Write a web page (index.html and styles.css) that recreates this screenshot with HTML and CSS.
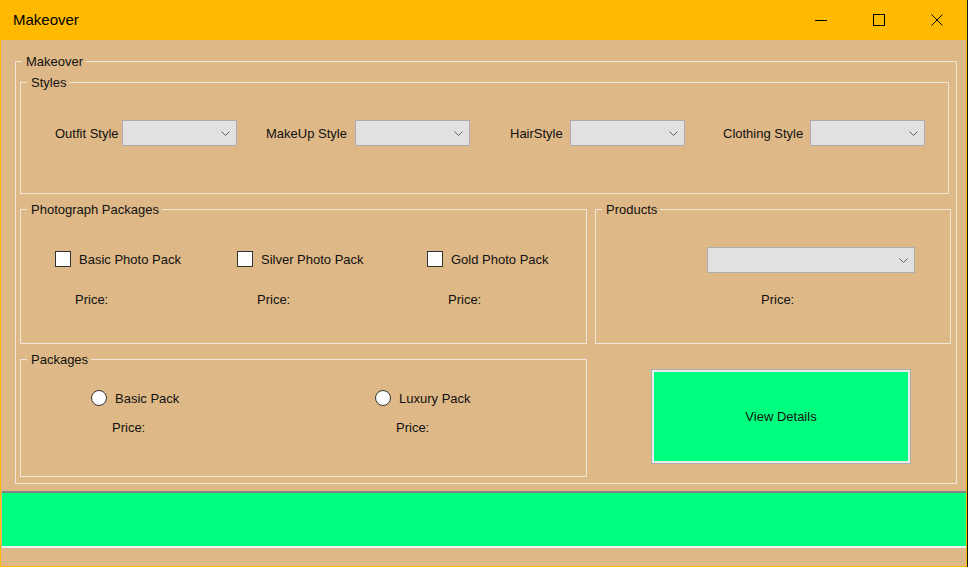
FILE: index.html
```html
<!DOCTYPE html>
<html>
<head>
<meta charset="utf-8">
<title>Makeover</title>
<link rel="stylesheet" href="styles.css">
</head>
<body>
<div class="window">
  <div class="titlebar">
    <span class="title">Makeover</span>
    <div class="caption-buttons">
      <div class="cbtn"><svg width="12" height="12" viewBox="0 0 12 12"><path d="M0 6.5H12" stroke="#000" stroke-width="1" fill="none"/></svg></div>
      <div class="cbtn"><svg width="12" height="12" viewBox="0 0 12 12"><rect x="0.5" y="0.5" width="11" height="11" stroke="#000" stroke-width="1" fill="none"/></svg></div>
      <div class="cbtn"><svg width="12" height="12" viewBox="0 0 12 12"><path d="M0.5 0.5L11.5 11.5M11.5 0.5L0.5 11.5" stroke="#000" stroke-width="1" fill="none"/></svg></div>
    </div>
  </div>
  <div class="client">
    <div class="group outer">
      <span class="legend">Makeover</span>

      <div class="group styles">
        <span class="legend">Styles</span>
        <div class="style-row">
          <span class="lbl">Outfit Style</span>
          <div class="combo"><svg width="9" height="5" viewBox="0 0 9 5"><path d="M0.5 0.5L4.5 4.5L8.5 0.5" stroke="#606060" fill="none"/></svg></div>
          <span class="lbl gap29">MakeUp Style</span>
          <div class="combo"><svg width="9" height="5" viewBox="0 0 9 5"><path d="M0.5 0.5L4.5 4.5L8.5 0.5" stroke="#606060" fill="none"/></svg></div>
          <span class="lbl gap40">HairStyle</span>
          <div class="combo"><svg width="9" height="5" viewBox="0 0 9 5"><path d="M0.5 0.5L4.5 4.5L8.5 0.5" stroke="#606060" fill="none"/></svg></div>
          <span class="lbl gap38">Clothing Style</span>
          <div class="combo"><svg width="9" height="5" viewBox="0 0 9 5"><path d="M0.5 0.5L4.5 4.5L8.5 0.5" stroke="#606060" fill="none"/></svg></div>
        </div>
      </div>

      <div class="row">
        <div class="group photo">
          <span class="legend">Photograph Packages</span>
          <div class="photo-grid">
            <label class="check"><span class="box"></span><span>Basic Photo Pack</span></label>
            <label class="check"><span class="box"></span><span>Silver Photo Pack</span></label>
            <label class="check"><span class="box"></span><span>Gold Photo Pack</span></label>
            <span class="price">Price:</span>
            <span class="price">Price:</span>
            <span class="price price-wide">Price:</span>
          </div>
        </div>
        <div class="group products">
          <span class="legend">Products</span>
          <div class="combo combo-wide"><svg width="9" height="5" viewBox="0 0 9 5"><path d="M0.5 0.5L4.5 4.5L8.5 0.5" stroke="#606060" fill="none"/></svg></div>
          <span class="product-price">Price:</span>
        </div>
      </div>

      <div class="row row3">
        <div class="group packages">
          <span class="legend">Packages</span>
          <div class="pack-grid">
            <label class="radio"><span class="circle"></span><span>Basic Pack</span></label>
            <label class="radio"><span class="circle"></span><span>Luxury Pack</span></label>
            <span class="pack-price">Price:</span>
            <span class="pack-price">Price:</span>
          </div>
        </div>
        <div class="view-btn">View Details</div>
      </div>
    </div>
    <div class="status-bar"></div>
  </div>
</div>
</body>
</html>
```

FILE: styles.css
```css
html, body {
  margin: 0;
  padding: 0;
}

body {
  background: #1b1b1b;
  font-family: "Liberation Sans", Arial, sans-serif;
  font-size: 13px;
  color: #111;
}

.window {
  width: 967px;
  height: 567px;
  box-sizing: border-box;
  border: 1px solid #FFB900;
  border-top: 0;
  background: #DEB887;
  display: flex;
  flex-direction: column;
}

.titlebar {
  height: 40px;
  flex-shrink: 0;
  background: #FFB900;
  display: flex;
  align-items: center;
}

.title {
  margin-left: 12px;
  font-size: 15px;
  line-height: 18px;
  color: #000;
}

.caption-buttons {
  margin-left: auto;
  display: flex;
}

.cbtn {
  width: 58px;
  height: 40px;
  display: flex;
  align-items: center;
  justify-content: center;
}

.cbtn svg {
  display: block;
}

.client {
  flex: 1;
  display: flex;
  flex-direction: column;
}

.group {
  position: relative;
  box-sizing: border-box;
  border: 1px solid #EEE6D8;
}

.legend {
  position: absolute;
  top: -8px;
  left: 6px;
  padding: 0 3px 0 4px;
  line-height: 15px;
  background: #DEB887;
  white-space: nowrap;
}

.outer {
  margin: 21px 0 0 14px;
  width: 942px;
  height: 423px;
}

.styles {
  margin: 20px 0 0 4px;
  width: 929px;
  height: 112px;
}

.style-row {
  display: grid;
  grid-template-columns: 67px 115px 118px 115px 100px 115px 125px 115px;
  align-items: center;
  margin: 37px 0 0 34px;
}

.lbl {
  line-height: 15px;
  white-space: nowrap;
}

.gap29 { padding-left: 29px; }
.gap40 { padding-left: 40px; }
.gap38 { padding-left: 38px; }

.combo {
  width: 115px;
  height: 26px;
  box-sizing: border-box;
  border: 1px solid #ADADAD;
  background: #E1E1E1;
  display: flex;
  align-items: center;
  justify-content: flex-end;
  padding-right: 6px;
}

.combo svg {
  display: block;
}

.row {
  display: flex;
  margin: 15px 0 0 4px;
}

.photo {
  width: 567px;
  height: 135px;
}

.products {
  margin-left: 8px;
  width: 356px;
  height: 135px;
}

.photo-grid {
  display: grid;
  grid-template-columns: 182px 190px auto;
  row-gap: 25px;
  margin: 41px 0 0 34px;
}

.check {
  display: flex;
  align-items: center;
  gap: 8px;
  height: 16px;
  line-height: 15px;
  white-space: nowrap;
}

.box {
  width: 16px;
  height: 16px;
  box-sizing: border-box;
  border: 1px solid #333;
  background: #fff;
  flex-shrink: 0;
}

.price {
  line-height: 15px;
  padding-left: 20px;
}

.price-wide {
  padding-left: 21px;
}

.combo-wide {
  width: 208px;
  margin: 37px 0 0 111px;
}

.product-price {
  display: block;
  line-height: 15px;
  margin: 19px 0 0 165px;
}

.row3 {
  align-items: flex-start;
}

.packages {
  width: 567px;
  height: 118px;
}

.pack-grid {
  display: grid;
  grid-template-columns: 284px auto;
  row-gap: 14px;
  margin: 30px 0 0 70px;
}

.radio {
  display: flex;
  align-items: center;
  gap: 8px;
  height: 16px;
  line-height: 15px;
  white-space: nowrap;
}

.circle {
  width: 16px;
  height: 16px;
  box-sizing: border-box;
  border: 1px solid #333;
  border-radius: 50%;
  background: #fff;
  flex-shrink: 0;
}

.pack-price {
  line-height: 15px;
  padding-left: 21px;
}

.view-btn {
  margin: 10px 0 0 64px;
  width: 260px;
  height: 95px;
  box-sizing: border-box;
  border: 1px solid #ADADAD;
  box-shadow: inset 0 0 0 2px #EBEBEB;
  background: #00FF7F;
  display: flex;
  align-items: center;
  justify-content: center;
}

.status-bar {
  margin: 7px 0 0 1px;
  height: 57px;
  box-sizing: border-box;
  border-top: 2px solid #858585;
  border-bottom: 2px solid #F2F2F2;
  background: #00FF7F;
}
```
